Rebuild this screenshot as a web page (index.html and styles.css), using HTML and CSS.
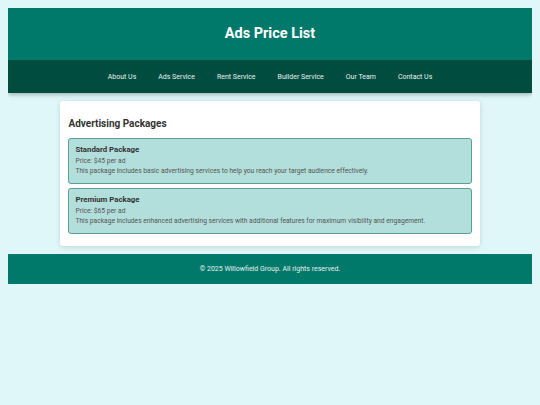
FILE: index.html
```html
<!DOCTYPE html>
<html lang="en">
<head>
    <meta charset="UTF-8">
    <meta name="viewport" content="width=device-width, initial-scale=1.0">
    <title>Ads Price List</title>
    <link rel="stylesheet" href="styles.css">
</head>
<body>
    <header>
        <h1>Ads Price List</h1>
        <nav>
            <a href="#">About Us</a>
            <a href="#">Ads Service</a>
            <a href="#">Rent Service</a>
            <a href="#">Builder Service</a>
            <a href="#">Our Team</a>
            <a href="#">Contact Us</a>
        </nav>
    </header>

    <div class="container">
        <h2>Advertising Packages</h2>
        <div class="package">
            <h3>Standard Package</h3>
            <p>Price: $45 per ad</p>
            <p>This package includes basic advertising services to help you reach your target audience effectively.</p>
        </div>
        <div class="package">
            <h3>Premium Package</h3>
            <p>Price: $65 per ad</p>
            <p>This package includes enhanced advertising services with additional features for maximum visibility and engagement.</p>
        </div>
    </div>

    <footer>
        <p>&copy; 2025 Willowfield Group. All rights reserved.</p>
    </footer>
</body>
</html>
```

FILE: styles.css
```css
* { box-sizing: border-box; }
body { font-family: 'Roboto', 'Liberation Sans', sans-serif; margin: 8px; padding: 0; background-color: #e0f7fa; color: #333; }

/* Header */
header { background-color: #00796b; color: white; box-shadow: 0 2px 4px rgba(0, 0, 0, 0.25); }
header h1 { margin: 0; height: 52px; line-height: 51px; padding-bottom: 1px; text-align: center; font-size: 14.5px; font-weight: bold; }
nav { background-color: #004d40; height: 33px; display: flex; justify-content: center; align-items: center; }
nav a { color: #e8f0ee; text-decoration: none; font-size: 7px; margin: 0 11px; }
nav a:hover { text-decoration: underline; }

/* Main */
.container { width: 80%; margin: 8px auto; background: white; padding: 12px 8px 12px 8px; border-radius: 3px; box-shadow: 0 1px 5px rgba(0, 0, 0, 0.15); }
.container h2 { font-size: 10px; line-height: 12px; margin: 5px 0 8px 0; color: #333; }
.package { background-color: #b2dfdb; border: 1px solid #5a9e94; border-radius: 3px; padding: 6px 6px 7px 6px; margin-bottom: 4px; }
.package:last-child { margin-bottom: 0; }
.package h3 { font-size: 7.8px; line-height: 10px; margin: 0 0 1px 0; color: #333; }
.package p { font-size: 6.7px; margin: 0; line-height: 10px; color: #555; }

/* Footer */
footer { background-color: #00796b; color: #e8f0ee; text-align: center; height: 30px; display: flex; align-items: center; justify-content: center; }
footer p { margin: 0; font-size: 7px; }
```
